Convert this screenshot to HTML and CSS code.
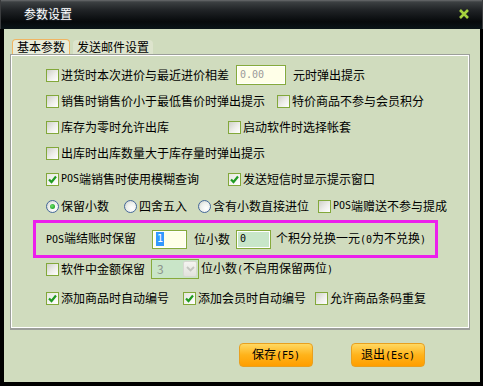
FILE: index.html
```html
<!DOCTYPE html>
<html lang="zh-CN">
<head>
    <meta charset="UTF-8">
    <meta name="viewport" content="width=device-width, initial-scale=1.0">
    <title>参数设置</title>
    <link rel="stylesheet" href="styles.css">
</head>
<body>
    <div class="window">
        <div class="titlebar">
            <span class="title">参数设置</span>
            <svg class="close" width="10" height="10" viewBox="0 0 10 10"><path d="M1 1 L9 9 M9 1 L1 9" stroke="#a6d13e" stroke-width="2.6"/></svg>
        </div>
        <div class="client">
            <div class="tabs">
                <div class="tab tab-active">基本参数</div>
                <div class="tab">发送邮件设置</div>
            </div>
            <div class="panel">
                <div class="row">
                    <label class="opt w190"><span class="cb"></span>进货时本次进价与最近进价相差</label>
                    <span class="field field-yellow w50 muted"><span class="en">0.00</span></span>
                    <span class="after">元时弹出提示</span>
                </div>
                <div class="row">
                    <label class="opt w231"><span class="cb"></span>销售时销售价小于最低售价时弹出提示</label>
                    <label class="opt"><span class="cb"></span>特价商品不参与会员积分</label>
                </div>
                <div class="row">
                    <label class="opt w182"><span class="cb"></span>库存为零时允许出库</label>
                    <label class="opt"><span class="cb"></span>启动软件时选择帐套</label>
                </div>
                <div class="row">
                    <label class="opt"><span class="cb"></span>出库时出库数量大于库存量时弹出提示</label>
                </div>
                <div class="row">
                    <label class="opt w182"><span class="cb checked"><svg width="11" height="11" viewBox="0 0 11 11"><path d="M2 5.5 L4.5 8 L9 2.5" fill="none" stroke="#1f9a22" stroke-width="2.2"/></svg></span><span class="en">POS</span>端销售时使用模糊查询</label>
                    <label class="opt"><span class="cb checked"><svg width="11" height="11" viewBox="0 0 11 11"><path d="M2 5.5 L4.5 8 L9 2.5" fill="none" stroke="#1f9a22" stroke-width="2.2"/></svg></span>发送短信时显示提示窗口</label>
                </div>
                <div class="row row-radio">
                    <label class="opt w78"><span class="radio selected"></span>保留小数</label>
                    <label class="opt w74"><span class="radio"></span>四舍五入</label>
                    <label class="opt w120"><span class="radio"></span>含有小数直接进位</label>
                    <label class="opt"><span class="cb"></span><span class="en">POS</span>端赠送不参与提成</label>
                </div>
                <div class="highlight">
                    <span class="w106"><span class="en">POS</span>端结账时保留</span>
                    <span class="field field-yellow w35"><span class="selection">1</span></span>
                    <span class="after">位小数</span>
                    <span class="field field-green w35 gap6"><span class="en">0</span></span>
                    <span class="after gap5">个积分兑换一元<span class="en">(0</span>为不兑换<span class="en">)</span></span>
                </div>
                <div class="row row-select">
                    <label class="opt w105"><span class="cb"></span>软件中金额保留</label>
                    <span class="select">
                        <span class="select-value">3</span>
                        <span class="select-arrow"><svg width="9" height="6" viewBox="0 0 9 6"><path d="M1 1 L4.5 4.5 L8 1" fill="none" stroke="#c4c6c0" stroke-width="1.8"/></svg></span>
                    </span>
                    <span class="after gap2">位小数<span class="en">(</span>不启用保留两位<span class="en">)</span></span>
                </div>
                <div class="row row-last">
                    <label class="opt w137"><span class="cb checked"><svg width="11" height="11" viewBox="0 0 11 11"><path d="M2 5.5 L4.5 8 L9 2.5" fill="none" stroke="#1f9a22" stroke-width="2.2"/></svg></span>添加商品时自动编号</label>
                    <label class="opt w132"><span class="cb checked"><svg width="11" height="11" viewBox="0 0 11 11"><path d="M2 5.5 L4.5 8 L9 2.5" fill="none" stroke="#1f9a22" stroke-width="2.2"/></svg></span>添加会员时自动编号</label>
                    <label class="opt"><span class="cb"></span>允许商品条码重复</label>
                </div>
            </div>
            <div class="buttons">
                <button class="btn">保存<span class="en">(F5)</span></button>
                <button class="btn">退出<span class="en">(Esc)</span></button>
            </div>
        </div>
    </div>
</body>
</html>
```

FILE: styles.css
```css
body {
    margin: 0;
    padding: 0;
    font-family: "Noto Sans CJK SC", "Noto Sans", sans-serif;
    font-size: 12px;
    color: #000;
}

.en {
    font-family: "DejaVu Sans Mono", "Liberation Mono", monospace;
    font-size: 10px;
}

.window {
    width: 483px;
    height: 386px;
    background-color: #000;
    display: flex;
    flex-direction: column;
}

.titlebar {
    height: 29px;
    flex-shrink: 0;
    display: flex;
    align-items: center;
    justify-content: space-between;
    padding: 0 13px 2px 23px;
    box-sizing: border-box;
    background: linear-gradient(to bottom, #6a6c6e 0, #3c4042 2px, #202326 35%, #06090b 75%, #0a1418 100%);
    border-left: 1px solid #3a3c3e;
    border-right: 1px solid #3a3c3e;
}

.title {
    color: #fff;
    font-size: 12px;
    line-height: 14px;
    text-shadow: 0 0 2px rgba(120, 140, 160, 0.6);
}

.close {
    display: block;
}

.client {
    flex: 1;
    margin: 0 3px 4px 4px;
    background-color: #d0dcbe;
    padding: 10px 0 0 6px;
}

.tabs {
    display: flex;
    align-items: flex-end;
    height: 15px;
    margin-left: 2px;
    gap: 3px;
}

.tab {
    height: 14px;
    line-height: 14px;
    padding: 0 4px;
    background-color: #dde4cd;
    border-radius: 4px 4px 0 0;
    white-space: nowrap;
}

.tab-active {
    height: 15px;
    line-height: 14px;
    width: 58px;
    box-sizing: border-box;
    padding: 0 4px;
    background-color: #e8ecda;
    border: 1px solid #f0b462;
    border-bottom: none;
    border-radius: 4px 4px 0 0;
}

.panel {
    width: 460px;
    height: 276px;
    box-sizing: border-box;
    border: 1px solid #9c9f9a;
    border-bottom-width: 2px;
    box-shadow: inset 1px 1px 0 #fff, inset -1px -1px 0 #fff;
    padding-top: 7px;
}

.row {
    display: flex;
    align-items: center;
    height: 26px;
    padding-left: 35px;
}

.row-radio {
    margin-top: 1px;
}

.row-select {
    height: 22px;
}

.row-last {
    margin-top: 5px;
}

.opt {
    display: flex;
    align-items: center;
    white-space: nowrap;
    line-height: 14px;
}

.w190 { width: 190px; }
.w231 { width: 231px; }
.w182 { width: 182px; }
.w78 { width: 78px; }
.w74 { width: 74px; }
.w120 { width: 120px; }
.w106 { width: 106px; }
.w105 { width: 105px; }
.w137 { width: 137px; }
.w132 { width: 132px; }
.w50 { width: 50px; }
.w35 { width: 35px; }

.cb {
    width: 13px;
    height: 13px;
    box-sizing: border-box;
    border: 1px solid #82a83a;
    background: linear-gradient(135deg, #cfd0c8 0%, #eeeeea 55%, #ffffff 100%);
    margin-right: 2px;
    display: flex;
    align-items: center;
    justify-content: center;
    flex-shrink: 0;
}

.cb.checked {
    background: linear-gradient(135deg, #e4e6de 0%, #f6f6f2 60%, #ffffff 100%);
}

.cb svg {
    display: block;
}

.radio {
    width: 13px;
    height: 13px;
    box-sizing: border-box;
    border-radius: 50%;
    border: 1px solid #44689a;
    background: radial-gradient(circle at 65% 65%, #ffffff 0%, #eef0ec 50%, #c8ccc6 100%);
    margin-right: 2px;
    flex-shrink: 0;
    position: relative;
}

.radio.selected::after {
    content: "";
    position: absolute;
    left: 3px;
    top: 3px;
    width: 5px;
    height: 5px;
    border-radius: 50%;
    background: radial-gradient(circle at 40% 40%, #6ee06a 0%, #24a82a 70%);
}

.field {
    height: 20px;
    box-sizing: border-box;
    border: 1px solid #86aa3c;
    box-shadow: inset 0 0 0 1px #fff;
    display: flex;
    align-items: center;
    padding-left: 3px;
    font-size: 12px;
    line-height: 14px;
    flex-shrink: 0;
}

.field-yellow {
    background-color: #ffffe8;
}

.field-green {
    background-color: #c8e6c9;
}

.muted {
    color: #9a9a9a;
}

.selection {
    background-color: #3399ff;
    color: #fff;
    padding: 0 1px;
    line-height: 14px;
    font-family: "DejaVu Sans Mono", monospace;
    font-size: 10px;
}

.after {
    margin-left: 7px;
    white-space: nowrap;
    line-height: 14px;
}

.gap6 { margin-left: 6px; }
.gap5 { margin-left: 5px; }
.gap2 { margin-left: 2px; }

.highlight {
    display: flex;
    align-items: center;
    width: 405px;
    height: 38px;
    box-sizing: border-box;
    margin: 1px 0 0 22px;
    border: 3px solid #ec20ec;
    padding-left: 10px;
    line-height: 14px;
}

.highlight .field {
    height: 19px;
}

.select {
    width: 48px;
    height: 20px;
    box-sizing: border-box;
    border: 1px solid #86aa3c;
    background-color: #c9e5c8;
    display: flex;
    align-items: center;
    justify-content: space-between;
    flex-shrink: 0;
}

.select-value {
    color: #8c948c;
    padding-left: 5px;
    line-height: 14px;
}

.select-arrow {
    width: 14px;
    height: 16px;
    margin-right: 1px;
    box-sizing: border-box;
    border: 1px solid #d8d8d2;
    border-radius: 2px;
    background: linear-gradient(to bottom, #f4f4f0, #e2e2dc);
    display: flex;
    align-items: center;
    justify-content: center;
}

.buttons {
    display: flex;
    padding: 13px 0 0 229px;
    gap: 38px;
}

.btn {
    width: 74px;
    height: 24px;
    padding: 0;
    font-family: "Noto Sans CJK SC", "Noto Sans", sans-serif;
    font-size: 12px;
    line-height: 14px;
    color: #000;
    background: linear-gradient(to bottom, #ffd862 0%, #ffb31a 50%, #ff9e00 100%);
    border: 1px solid #e8a020;
    border-radius: 4px;
    cursor: pointer;
}
```
